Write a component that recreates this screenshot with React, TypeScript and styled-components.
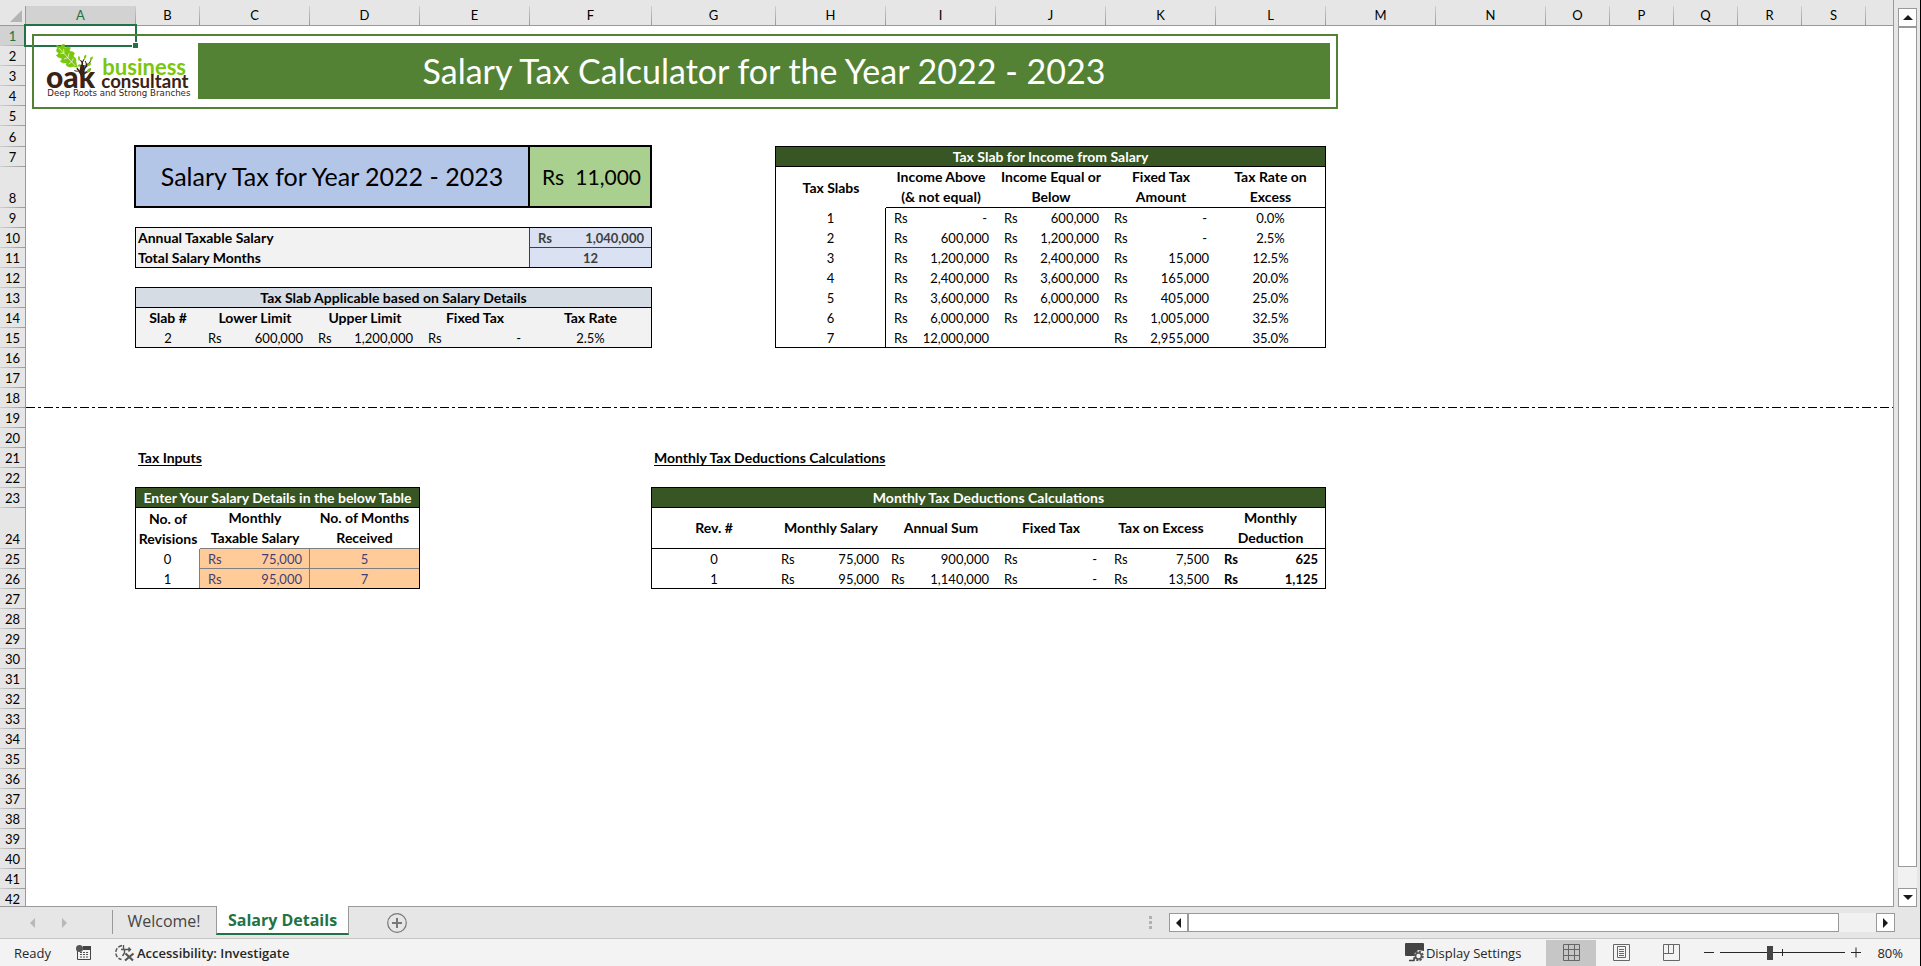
import React from 'react';
import styled, { createGlobalStyle, css } from 'styled-components';

const GlobalStyle = createGlobalStyle`
  *, *::before, *::after { box-sizing: border-box; }
  body {
    margin: 0;
    background: #e6e6e6;
    color: #000;
    font: 13px/20px Lato, "Liberation Sans", sans-serif;
  }
  button { font: inherit; color: inherit; padding: 0; border: 0; background: none; }
`;

const LINE = '#999999';
const CHROME = '#e6e6e6';
const ACCENT = '#217346';

/* ---------- data ---------- */

const COLUMN_WIDTHS = [110, 64, 110, 110, 110, 122, 124, 110, 110, 110, 110, 110, 110, 110, 64, 64, 64, 64, 64];
const COLUMNS = 'ABCDEFGHIJKLMNOPQRS'.split('');
const ROWS = Array.from({ length: 42 }, (_, i) => i + 1);
const rowHeight = (row: number) => (row === 8 || row === 24 ? 41 : row === 6 ? 21 : 20);

const TAX_SLABS = [
  ['1', '-', '600,000', '-', '0.0%'],
  ['2', '600,000', '1,200,000', '-', '2.5%'],
  ['3', '1,200,000', '2,400,000', '15,000', '12.5%'],
  ['4', '2,400,000', '3,600,000', '165,000', '20.0%'],
  ['5', '3,600,000', '6,000,000', '405,000', '25.0%'],
  ['6', '6,000,000', '12,000,000', '1,005,000', '32.5%'],
  ['7', '12,000,000', '', '2,955,000', '35.0%'],
];

const DEDUCTIONS = [
  ['0', '75,000', '900,000', '-', '7,500', '625'],
  ['1', '95,000', '1,140,000', '-', '13,500', '1,125'],
];

const REVISIONS = [
  ['0', '75,000', '5'],
  ['1', '95,000', '7'],
];

/* ---------- window ---------- */

const Window = styled.div`
  display: flex;
  flex-direction: column;
  height: 100vh;
  border-right: 1px solid #000;
  background: ${CHROME};
`;

const WorkArea = styled.div`
  display: flex;
  flex: 1;
  min-height: 0;
`;

const Sheet = styled.main`
  flex: 1;
  min-width: 0;
  display: grid;
  grid-template-columns: 26px ${COLUMN_WIDTHS.map((w) => `${w}px`).join(' ')} 1fr;
  grid-template-rows: 26px ${ROWS.map((r) => `${rowHeight(r)}px`).join(' ')};
  overflow: hidden;
  border-right: 1px solid ${LINE};
  border-bottom: 1px solid ${LINE};
  background: #fff;
`;

const HeaderBar = styled.div`
  grid-column: 1 / -1;
  grid-row: 1;
  display: grid;
  grid-template-columns: subgrid;
  padding-top: 6px;
  margin-right: -1px;
  background: ${CHROME};
  border-bottom: 1px solid ${LINE};
`;

const Corner = styled.button`
  display: flex;
  align-items: flex-end;
  justify-content: flex-end;
  padding: 0 3px 3px 0;
  border-right: 1px solid ${LINE};
`;

const ColumnHeader = styled.div<{ $selected?: boolean }>`
  padding-right: 1px;
  text-align: center;
  line-height: 19px;
  color: ${(p) => (p.$selected ? ACCENT : '#000')};
  background:
    linear-gradient(#d0d0d0, ${LINE}) right / 1px 100% no-repeat,
    ${(p) => (p.$selected ? '#d2d2d2' : CHROME)};
`;

const RowBar = styled.div`
  grid-column: 1;
  grid-row: 2 / -1;
  display: grid;
  grid-template-rows: subgrid;
  background: ${CHROME};
  border-right: 1px solid ${LINE};
`;

const RowHeader = styled.div<{ $selected?: boolean }>`
  display: flex;
  align-items: flex-end;
  justify-content: center;
  color: ${(p) => (p.$selected ? ACCENT : '#000')};
  background:
    linear-gradient(90deg, #d0d0d0, ${LINE}) bottom / 100% 1px no-repeat,
    ${(p) => (p.$selected ? '#d2d2d2' : CHROME)};
`;

/* Cell cursor drawn over the cell grid lines. */
const Cursor = styled.div`
  grid-column: 2;
  grid-row: 2;
  position: relative;
  margin: -2px -1px -1px -2px;
  border: 2px solid ${ACCENT};
  &::after {
    content: '';
    position: absolute;
    right: -4px;
    bottom: -4px;
    width: 7px;
    height: 7px;
    background: ${ACCENT};
    border: 1px solid #fff;
  }
`;

/* ---------- banner ---------- */

const Banner = styled.header`
  grid-column: 2 / 14;
  grid-row: 2 / 7;
  position: relative;
  display: flex;
  align-self: start;
  height: 75px;
  margin: 8px -12px 0 6px;
  border: 2px solid #548235;
`;

const LogoBox = styled.div`
  width: 164px;
  padding: 4px 0 0 6px;
`;

const BannerTitle = styled.h1`
  flex: 1;
  margin: 7px 6px 8px 0;
  background: #548235;
  color: #fff;
  font-size: 34px;
  font-weight: 400;
  line-height: 56px;
  text-align: center;
`;

/* ---------- sheet content ---------- */

interface Area {
  $cols: string;
  $rows: string;
}

const area = css<Area>`
  grid-column: ${(p) => p.$cols};
  grid-row: ${(p) => p.$rows};
`;

const Summary = styled.section<Area>`
  ${area}
  display: grid;
  grid-template-columns: 1fr 120px;
  margin: -2px 0 0 -2px;
  border: 2px solid #000;
  line-height: 59px;
`;

const SummaryLabel = styled.h2`
  margin: 0;
  background: #b4c6e7;
  border-right: 2px solid #000;
  font-size: 25px;
  font-weight: 400;
  line-height: inherit;
  text-align: center;
`;

const SummaryValue = styled.div`
  display: flex;
  justify-content: space-between;
  padding: 0 9px 0 12px;
  background: #a9d08e;
  font-size: 21px;
`;

const Table = styled.table<Area & { $fill?: string }>`
  ${area}
  width: calc(100% + 1px);
  height: calc(100% + 1px);
  margin: -1px 0 0 -1px;
  table-layout: fixed;
  border-collapse: separate;
  border-spacing: 0;
  border: 1px solid #000;
  background: ${(p) => p.$fill || '#fff'};
`;

type Edge = { $right?: string; $bottom?: string };

const edges = css<Edge>`
  ${(p) => p.$right && `border-right: 1px solid ${p.$right};`}
  ${(p) => p.$bottom && `border-bottom: 1px solid ${p.$bottom};`}
`;

const Row = styled.tr<{ $height?: number }>`
  height: ${(p) => p.$height || 20}px;
`;

const Band = styled.th<{ $tone?: 'light' }>`
  padding: 1px 0 0;
  border-bottom: 1px solid #000;
  background: ${(p) => (p.$tone ? '#d6dce4' : '#375623')};
  color: ${(p) => (p.$tone ? '#000' : '#fff')};
  font-size: 14px;
  line-height: 18px;
`;

const Head = styled.th<Edge & { $left?: boolean; $single?: boolean }>`
  padding: ${(p) => (p.$single ? 1 : 0)}px 0 0 ${(p) => (p.$left ? 2 : 0)}px;
  font-size: 14px;
  line-height: ${(p) => (p.$single ? 18 : 20)}px;
  vertical-align: ${(p) => (p.$single ? 'top' : 'middle')};
  text-align: ${(p) => (p.$left ? 'left' : 'center')};
  white-space: pre;
  ${edges}
`;

const Cell = styled.td<Edge & { $fill?: string; $ink?: string; $bold?: boolean }>`
  padding: 1px 0 0;
  vertical-align: top;
  text-align: center;
  line-height: 18px;
  background: ${(p) => p.$fill || 'transparent'};
  color: ${(p) => p.$ink || '#000'};
  font-weight: ${(p) => (p.$bold ? 700 : 400)};
  ${edges}
`;

const Amount = styled.span<{ $dash: boolean; $tight?: boolean }>`
  display: flex;
  justify-content: space-between;
  padding: 0 ${(p) => (p.$dash ? 9 : 7)}px 0 ${(p) => (p.$tight ? 5 : 8)}px;
`;

const SectionTitle = styled.h3<Area>`
  ${area}
  margin: 0;
  padding-left: 2px;
  font-size: 14px;
  line-height: 20px;
  text-decoration: underline;
  text-underline-offset: 2px;
  white-space: nowrap;
`;

const PageBreak = styled.hr`
  grid-column: 2 / -1;
  grid-row: 19;
  align-self: end;
  width: 100%;
  height: 1px;
  margin: 0;
  border: 0;
  background: repeating-linear-gradient(90deg, #000 0 9px, #fff 9px 12px, #000 12px 15px, #fff 15px 18px);
`;

/* ---------- scroll bars ---------- */

const VScroll = styled.div`
  display: flex;
  flex-direction: column;
  width: 19px;
  margin: 8px 3px 0 4px;
  background: #f1f1f1;
`;

const ScrollButton = styled.button`
  display: flex;
  align-items: center;
  justify-content: center;
  flex: none;
  width: 19px;
  height: 19px;
  border: 1px solid ${LINE};
  background: #fff;
`;

const VThumb = styled.div`
  flex: 1;
  margin-bottom: 21px;
  border: 1px solid ${LINE};
  background: #fff;
`;

const HScroll = styled.div`
  display: flex;
  width: 726px;
  height: 19px;
  background: #f1f1f1;
`;

const HThumb = styled.div`
  flex: 1;
  margin-right: 37px;
  border: 1px solid ${LINE};
  background: #fff;
`;

/* ---------- tab strip ---------- */

const TabStrip = styled.nav`
  display: flex;
  align-items: flex-start;
  height: 31px;
  padding-right: 25px;
  font: 16px/28px "Open Sans", "Noto Sans", sans-serif;
`;

const TabArrows = styled.div`
  display: flex;
  gap: 27px;
  width: 112px;
  padding: 11px 0 0 30px;
`;

const ArrowButton = styled.button`
  display: flex;
`;

const Tab = styled.button<{ $active?: boolean }>`
  height: 28px;
  ${(p) =>
    p.$active
      ? css`
          width: 133px;
          margin-top: -1px;
          height: 29px;
          background: #fff;
          color: ${ACCENT};
          font-weight: 700;
          border-right: 1px solid ${LINE};
          border-left: 1px solid ${LINE};
          border-bottom: 2px solid ${ACCENT};
        `
      : css`
          width: 104px;
          color: #444;
          background: linear-gradient(${LINE}, ${LINE}) 0 3px / 1px 24px no-repeat;
        `}
`;

const AddTab = styled.button`
  display: flex;
  margin: 6px auto 0 38px;
`;

const Grip = styled.div`
  display: grid;
  gap: 2px;
  margin: 9px 17px 0 0;
  &, & i { width: 3px; }
  & i { height: 3px; background: #b0b0b0; }
`;

const HScrollSlot = styled.div`
  padding-top: 6px;
`;

/* ---------- status bar ---------- */

const StatusBar = styled.footer`
  display: flex;
  align-items: center;
  height: 28px;
  padding: 0 17px 0 14px;
  border-top: 1px solid #c6c6c6;
  background: #f3f3f3;
  color: #262626;
  font: 13px/26px "Open Sans", "Noto Sans", sans-serif;
`;

const StatusText = styled.span`
  width: 62px;
`;

const StatusButton = styled.button<{ $bold?: boolean }>`
  display: flex;
  align-items: center;
  gap: 2px;
  font-weight: ${(p) => (p.$bold ? 600 : 400)};
`;

const StatusLeft = styled.div`
  display: flex;
  align-items: center;
  gap: 24px;
  margin-right: auto;
`;

const Views = styled.div`
  display: flex;
  margin: 0 8px 0 25px;
`;

const ViewButton = styled.button<{ $active?: boolean }>`
  display: flex;
  align-items: center;
  justify-content: center;
  width: 50px;
  height: 26px;
  background: ${(p) => (p.$active ? '#c6c6c6' : 'transparent')};
`;

const ZoomGroup = styled.div`
  display: flex;
  align-items: center;
  gap: 6px;
`;

const ZoomSlider = styled.input`
  appearance: none;
  width: 125px;
  height: 15px;
  margin: 0;
  background:
    linear-gradient(#262626, #262626) center / 100% 1px no-repeat,
    linear-gradient(#262626, #262626) center / 1px 7px no-repeat;
  &::-webkit-slider-thumb {
    appearance: none;
    width: 6px;
    height: 14px;
    background: #444;
  }
`;

const ZoomValue = styled.button`
  margin-left: 10px;
`;

/* ---------- drawings ---------- */

const Logo = () => (
  <svg width="160" height="60" viewBox="0 0 480 180" role="img" aria-label="Oak Business Consultant" overflow="visible">
    <path
      fill="#7ac70c"
      stroke="#7ac70c"
      strokeWidth="2"
      strokeLinejoin="round"
      d="M50 16 Q58 21 62 20 Q65 12 73 13 Q72 21 76 24 Q82 18 91 23 Q87 30 90 35 Q98 33 104 40 Q98 46 101 51 Q108 53 108 60 Q106 64 112 82 Q98 77 92 81 Q84 82 78 75 Q82 70 78 68 Q68 72 61 64 Q68 59 65 54 Q54 56 49 46 Q57 43 56 38 Q48 36 50 30 Q54 26 50 16 Z"
    />
    <path stroke="#fff" strokeWidth="2" fill="none" d="M57 24 L106 78 M72 40 L71 27 M72 40 L61 40 M84 53 L87 40 M84 53 L72 57 M95 66 L100 55 M95 66 L86 72" />
    <path
      stroke="#3b2314"
      fill="none"
      strokeLinecap="round"
      strokeWidth="5"
      d="M126 122 C128 104 118 96 112 86 M124 104 C124 92 138 88 140 72 M123 96 C116 84 132 76 126 64 M126 106 C132 96 146 98 150 88 M130 84 L124 78 M138 80 L148 70"
    />
    <path stroke="#3b2314" fill="none" strokeWidth="3" strokeLinecap="round" d="M126 66 L119 60 M127 68 L132 58 M140 74 L136 64 M112 94 L104 92 M148 70 L152 62" />
    <path
      fill="#7ac70c"
      d="M116 62 Q112 52 116 47 Q124 53 116 62 Z M132 58 Q130 46 138 44 Q142 52 132 58 Z M150 62 Q148 52 158 49 Q160 60 150 62 Z M141 78 Q142 66 154 70 Q152 80 141 78 Z M140 98 Q140 86 152 84 Q154 96 140 98 Z M148 102 Q152 92 164 98 Q158 108 148 102 Z M112 78 Q116 70 124 74 Q122 84 112 78 Z"
    />
    <text x="18" y="143" fill="#3b2314" fontFamily="Lato, sans-serif" fontSize="90" fontWeight="900">oak</text>
    <text x="187" y="104" fill="#7ac70c" fontFamily="Lato, sans-serif" fontSize="66" fontWeight="700">business</text>
    <text x="184" y="144" fill="#3b2314" fontFamily="Lato, sans-serif" fontSize="56" fontWeight="700">consultant</text>
    <text x="22" y="168" fill="#3b2314" fontFamily="DejaVu Sans, sans-serif" fontSize="26">Deep Roots and Strong Branches</text>
  </svg>
);

const Triangle = ({ dir, fill = '#1a1a1a' }: { dir: 'up' | 'down' | 'left' | 'right'; fill?: string }) => {
  const points = { up: '0,5 5,0 10,5', down: '0,0 5,5 10,0', left: '5,0 0,5 5,10', right: '0,0 5,5 0,10' }[dir];
  const upright = dir === 'up' || dir === 'down';
  return (
    <svg width={upright ? 10 : 5} height={upright ? 5 : 10}>
      <polygon points={points} fill={fill} />
    </svg>
  );
};

const MacroIcon = () => (
  <svg width="15" height="16" viewBox="0 0 15 16">
    <path d="M1.5 5V14.5H14.5V2.5H7" fill="none" stroke="#444" />
    <rect x="7" y="1" width="8" height="4" fill="#444" />
    <circle cx="3.5" cy="3.5" r="3.5" fill="#555" />
    <path d="M4 7.5H13 M4 9.5H13 M4 12H13" stroke="#555" strokeDasharray="2 1" />
  </svg>
);

const AccessibilityIcon = () => (
  <svg width="20" height="18" viewBox="0 0 20 18" fill="none" stroke="#555">
    <path d="M7 1.5C3 2.5 .8 5 .8 8.5C.8 12 3 14.5 6.5 15.5" strokeWidth="1.5" strokeDasharray="4 1.5" />
    <path d="M8.5 1V6 M6 5.5H9 M9 5.5H15.5 M13.5 3.5L15.5 5.5L13.5 7.5 M9.5 6V9L7.5 12" strokeWidth="1.4" />
    <path d="M10.5 9.5L18 16.5 M18.5 9.5L10 16.5" strokeWidth="2.2" />
  </svg>
);

const DisplayIcon = () => (
  <svg width="19" height="19" viewBox="0 0 19 19">
    <path d="M1 0H18Q19 0 19 1V8L13 7L9 11V13H1Q0 13 0 12V1Q0 0 1 0Z" fill="#444" />
    <path d="M4 17.5H9V15" stroke="#444" strokeWidth="1.5" fill="none" />
    <circle cx="13.5" cy="13" r="4" fill="#f3f3f3" stroke="#555" strokeWidth="2.6" strokeDasharray="2 1.1" />
    <circle cx="13.5" cy="13" r="3" fill="none" stroke="#555" strokeWidth="1.6" />
  </svg>
);

const NormalIcon = () => (
  <svg width="17" height="17" fill="none" stroke="#666">
    <path d="M.5 .5H16.5V16.5H.5Z M5.5 0V17 M11.5 0V17 M0 5.5H17 M0 11.5H17" />
  </svg>
);

const PageLayoutIcon = () => (
  <svg width="17" height="17" fill="none" stroke="#666">
    <path d="M.5 .5H16.5V16.5H.5Z M4.5 2.5H12.5V13.5H4.5Z M6 5.5H11 M6 7.5H11 M6 9.5H11 M6 11.5H11" />
  </svg>
);

const PageBreakIcon = () => (
  <svg width="17" height="17" fill="none" stroke="#666">
    <path d="M.5 .5H16.5V16.5H.5Z M.5 9.5H10.5V.5 M5.5 .5V9.5" />
  </svg>
);

const Sign = ({ plus }: { plus?: boolean }) => (
  <svg width="10" height="11" stroke="#262626" fill="none">
    <path d={plus ? 'M0 5.5H10 M5 .5V10.5' : 'M0 5.5H10'} />
  </svg>
);

/* ---------- tables ---------- */

const Cols = ({ widths }: { widths: number[] }) => (
  <colgroup>
    {widths.map((w, i) => (
      <col key={i} width={w} />
    ))}
    <col />
  </colgroup>
);

const Money = ({ value, tight }: { value: string; tight?: boolean }) =>
  value ? (
    <Amount $dash={value === '-'} $tight={tight}>
      <span>Rs</span>
      <span>{value}</span>
    </Amount>
  ) : null;

const SalaryFacts = () => (
  <Table $cols="3 / 8" $rows="11 / 13" $fill="#f2f2f2">
    <Cols widths={[394]} />
    <tbody>
      <Row>
        <Head $left $single scope="row" $right="#3f3f3f">Annual Taxable Salary</Head>
        <Cell $bold $fill="#d9e1f2" $ink="#3f3f3f" $bottom="#3f3f3f"><Money value="1,040,000" /></Cell>
      </Row>
      <Row $height={19}>
        <Head $left $single scope="row" $right="#3f3f3f">Total Salary Months</Head>
        <Cell $bold $fill="#d9e1f2" $ink="#3f3f3f">12</Cell>
      </Row>
    </tbody>
  </Table>
);

const ApplicableSlab = () => (
  <Table $cols="3 / 8" $rows="14 / 17" $fill="#f2f2f2">
    <Cols widths={[64, 110, 110, 110]} />
    <thead>
      <Row><Band colSpan={5} $tone="light">Tax Slab Applicable based on Salary Details</Band></Row>
      <Row>
        {['Slab #', 'Lower Limit', 'Upper Limit', 'Fixed Tax', 'Tax Rate'].map((h) => (
          <Head key={h} $single scope="col">{h}</Head>
        ))}
      </Row>
    </thead>
    <tbody>
      <Row $height={19}>
        <Cell>2</Cell>
        <Cell><Money value="600,000" /></Cell>
        <Cell><Money value="1,200,000" /></Cell>
        <Cell><Money value="-" /></Cell>
        <Cell>2.5%</Cell>
      </Row>
    </tbody>
  </Table>
);

const SlabTable = () => (
  <Table $cols="9 / 14" $rows="8 / 17">
    <Cols widths={[110, 110, 110, 110]} />
    <thead>
      <Row><Band colSpan={5}>Tax Slab for Income from Salary</Band></Row>
      <Row $height={41}>
        <Head scope="col">Tax Slabs</Head>
        <Head scope="col" $bottom="#000">{'Income Above\n(& not equal)'}</Head>
        <Head scope="col" $bottom="#000">{'Income Equal or\nBelow'}</Head>
        <Head scope="col" $bottom="#000">{'Fixed Tax\nAmount'}</Head>
        <Head scope="col" $bottom="#000">{'Tax Rate on\nExcess'}</Head>
      </Row>
    </thead>
    <tbody>
      {TAX_SLABS.map(([slab, above, below, fixed, rate], i) => (
        <Row key={slab} $height={i === 6 ? 19 : 20}>
          <Cell $right="#000">{slab}</Cell>
          <Cell><Money value={above} /></Cell>
          <Cell><Money value={below} /></Cell>
          <Cell><Money value={fixed} /></Cell>
          <Cell>{rate}</Cell>
        </Row>
      ))}
    </tbody>
  </Table>
);

const InputTable = () => (
  <Table $cols="3 / 6" $rows="24 / 28">
    <Cols widths={[64, 110]} />
    <thead>
      <Row><Band colSpan={3}>Enter Your Salary Details in the below Table</Band></Row>
      <Row $height={41}>
        <Head scope="col">{'No. of\nRevisions'}</Head>
        <Head scope="col" $bottom="#7f7f7f">{'Monthly\nTaxable Salary'}</Head>
        <Head scope="col" $bottom="#7f7f7f">{'No. of Months\nReceived'}</Head>
      </Row>
    </thead>
    <tbody>
      {REVISIONS.map(([rev, salary, months], i) => {
        const bottom = i === 0 ? '#7f7f7f' : undefined;
        return (
          <Row key={rev} $height={i === 0 ? 20 : 19}>
            <Cell $right="#7f7f7f">{rev}</Cell>
            <Cell $fill="#ffcc99" $ink="#3f3f76" $right="#7f7f7f" $bottom={bottom}><Money value={salary} /></Cell>
            <Cell $fill="#ffcc99" $ink="#3f3f76" $bottom={bottom}>{months}</Cell>
          </Row>
        );
      })}
    </tbody>
  </Table>
);

const DeductionTable = () => (
  <Table $cols="8 / 14" $rows="24 / 28">
    <Cols widths={[124, 110, 110, 110, 110]} />
    <thead>
      <Row><Band colSpan={6}>Monthly Tax Deductions Calculations</Band></Row>
      <Row $height={41}>
        {['Rev. #', 'Monthly Salary', 'Annual Sum', 'Fixed Tax', 'Tax on Excess', 'Monthly\nDeduction'].map((h) => (
          <Head key={h} scope="col" $bottom="#000">{h}</Head>
        ))}
      </Row>
    </thead>
    <tbody>
      {DEDUCTIONS.map(([rev, ...amounts], i) => (
        <Row key={rev} $height={i === 0 ? 20 : 19}>
          <Cell>{rev}</Cell>
          {amounts.map((amount, col) => (
            <Cell key={col} $bold={col === 4}><Money value={amount} tight={col < 2} /></Cell>
          ))}
        </Row>
      ))}
    </tbody>
  </Table>
);

export default function App() {
  return (
    <>
      <GlobalStyle />
      <Window>
        <WorkArea>
          <Sheet>
            <HeaderBar>
              <Corner aria-label="Select all">
                <svg width="12" height="12"><polygon points="12,0 12,12 0,12" fill="#b4b4b4" /></svg>
              </Corner>
              {COLUMNS.map((c) => (
                <ColumnHeader key={c} $selected={c === 'A'}>{c}</ColumnHeader>
              ))}
            </HeaderBar>
            <RowBar>
              {ROWS.map((r) => (
                <RowHeader key={r} $selected={r === 1}>{r}</RowHeader>
              ))}
            </RowBar>
            <Cursor />
            <Banner>
              <LogoBox><Logo /></LogoBox>
              <BannerTitle>Salary Tax Calculator for the Year 2022 - 2023</BannerTitle>
            </Banner>
            <Summary $cols="3 / 8" $rows="8 / 10">
              <SummaryLabel>Salary Tax for Year 2022 - 2023</SummaryLabel>
              <SummaryValue><span>Rs</span><span>11,000</span></SummaryValue>
            </Summary>
            <SalaryFacts />
            <ApplicableSlab />
            <SlabTable />
            <PageBreak />
            <SectionTitle $cols="3 / 6" $rows="22">Tax Inputs</SectionTitle>
            <SectionTitle $cols="8 / 11" $rows="22">Monthly Tax Deductions Calculations</SectionTitle>
            <InputTable />
            <DeductionTable />
          </Sheet>
          <VScroll>
            <ScrollButton aria-label="Scroll up"><Triangle dir="up" /></ScrollButton>
            <VThumb />
            <ScrollButton aria-label="Scroll down"><Triangle dir="down" /></ScrollButton>
          </VScroll>
        </WorkArea>
        <TabStrip>
          <TabArrows>
            <ArrowButton aria-label="Previous sheet"><Triangle dir="left" fill="#b8b8b8" /></ArrowButton>
            <ArrowButton aria-label="Next sheet"><Triangle dir="right" fill="#b8b8b8" /></ArrowButton>
          </TabArrows>
          <Tab>Welcome!</Tab>
          <Tab $active>Salary Details</Tab>
          <AddTab aria-label="New sheet">
            <svg width="20" height="20" fill="none" stroke="#777">
              <circle cx="10" cy="10" r="9.3" strokeWidth="1.2" />
              <path d="M5 10H15 M10 5V15" strokeWidth="2" />
            </svg>
          </AddTab>
          <Grip><i /><i /><i /></Grip>
          <HScrollSlot>
            <HScroll>
              <ScrollButton aria-label="Scroll left"><Triangle dir="left" /></ScrollButton>
              <HThumb />
              <ScrollButton aria-label="Scroll right"><Triangle dir="right" /></ScrollButton>
            </HScroll>
          </HScrollSlot>
        </TabStrip>
        <StatusBar>
          <StatusText>Ready</StatusText>
          <StatusLeft>
            <StatusButton aria-label="Record macro"><MacroIcon /></StatusButton>
            <StatusButton $bold><AccessibilityIcon />Accessibility: Investigate</StatusButton>
          </StatusLeft>
          <StatusButton><DisplayIcon />Display Settings</StatusButton>
          <Views>
            <ViewButton $active aria-label="Normal"><NormalIcon /></ViewButton>
            <ViewButton aria-label="Page layout"><PageLayoutIcon /></ViewButton>
            <ViewButton aria-label="Page break preview"><PageBreakIcon /></ViewButton>
          </Views>
          <ZoomGroup>
            <StatusButton aria-label="Zoom out"><Sign /></StatusButton>
            <ZoomSlider type="range" min={10} max={190} defaultValue={80} aria-label="Zoom" />
            <StatusButton aria-label="Zoom in"><Sign plus /></StatusButton>
            <ZoomValue>80%</ZoomValue>
          </ZoomGroup>
        </StatusBar>
      </Window>
    </>
  );
}
